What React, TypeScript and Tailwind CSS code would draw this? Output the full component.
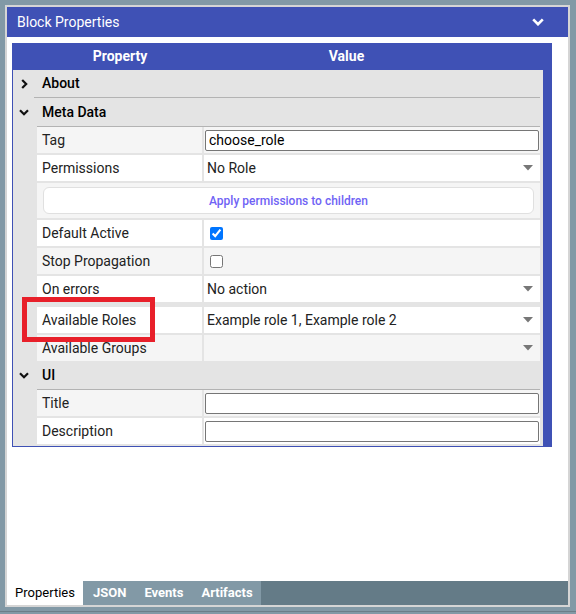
import React from "react";

const FONT = { fontFamily: "Roboto, 'Liberation Sans', sans-serif" };

function Caret() {
  return (
    <svg width="10" height="6" viewBox="0 0 10 6" className="shrink-0">
      <path d="M0 0 L10 0 L5 5.5 Z" fill="#777" />
    </svg>
  );
}

function ChevronDown({ color = "#111", size = 10 }: { color?: string; size?: number }) {
  return (
    <svg width={size} height={size * 0.7} viewBox="0 0 10 7">
      <path d="M1 1.2 L5 5.2 L9 1.2" fill="none" stroke={color} strokeWidth="2.2" />
    </svg>
  );
}

function ChevronRight() {
  return (
    <svg width="7" height="10" viewBox="0 0 7 10">
      <path d="M1.2 1 L5.2 5 L1.2 9" fill="none" stroke="#111" strokeWidth="2.2" />
    </svg>
  );
}

function Row({
  label,
  stripe,
  children,
  className = "",
}: {
  label: string;
  stripe: boolean;
  children?: React.ReactNode;
  className?: string;
}) {
  const bg = stripe ? "bg-[#f5f5f5]" : "bg-white";
  return (
    <div className={`flex gap-[2px] h-[26px] ${className}`}>
      <div className={`w-[165px] shrink-0 ${bg} flex items-center pl-[5px] text-[14px] text-[#222]`}>
        {label}
      </div>
      <div className={`flex-1 ${bg} flex items-center pl-px pr-[7px]`}>{children}</div>
    </div>
  );
}

function SelectValue({ text }: { text?: string }) {
  return (
    <div className="flex-1 flex items-center justify-between pl-[2px]">
      <span className="text-[14px] text-[#222]">{text}</span>
      <Caret />
    </div>
  );
}

function TextInput({ value = "" }: { value?: string }) {
  return (
    <div className="flex-1 h-[21px] bg-white border border-[#767676] rounded-[2px] flex items-center pl-[3px] text-[14px] text-black mr-[-6px]">
      {value}
    </div>
  );
}

function SectionHead({
  title,
  open,
  lineLeft,
  h,
}: {
  title: string;
  open: boolean;
  lineLeft: string;
  h: string;
}) {
  return (
    <div>
      <div className={`${h} flex items-center`}>
        <div className="w-[22px] flex justify-center">{open ? <ChevronDown /> : <ChevronRight />}</div>
        <span className="ml-[7px] text-[14px] font-medium text-black">{title}</span>
      </div>
      <div className={`h-px bg-[#b3b3b3] ${lineLeft}`} />
    </div>
  );
}

export default function App() {
  return (
    <div className="relative w-[576px] h-[614px] bg-[#8299a6] overflow-hidden" style={FONT}>
      <div className="absolute left-0 right-0 top-[611px] h-px bg-[#6c7e88]" />
      <div className="pt-[5px] pl-[5px] pr-[6px]">
        <div className="border-2 border-[#d5d5d5] flex flex-col h-[602px]">
          {/* header */}
          <div className="h-[30px] bg-[#3f51b5] flex items-center justify-between pl-[10px] pr-[24px]">
            <span className="text-white text-[14px]">Block Properties</span>
            <ChevronDown color="#fff" size={12} />
          </div>

          {/* content */}
          <div className="flex-1 bg-white pt-[6px] pl-[5px] pr-[16px]">
            <div className="bg-[#3f51b5] pl-px pb-px pr-[9px]">
              <div className="h-[27px] flex items-center text-white font-bold text-[14px] mr-[-9px]">
                <div className="w-[214px] text-center">Property</div>
                <div className="flex-1 text-center pr-[86px]">Value</div>
              </div>
              <div className="bg-[#e4e4e4] pr-[3px] pb-[2px]">
                <SectionHead title="About" open={false} lineLeft="ml-[21px]" h="h-[27px]" />
                <SectionHead title="Meta Data" open lineLeft="ml-[24px]" h="h-[28px]" />
                <div className="pl-[24px] flex flex-col gap-[2px]">
                  <Row label="Tag" stripe>
                    <TextInput value="choose_role" />
                  </Row>
                  <Row label="Permissions" stripe={false}>
                    <SelectValue text="No Role" />
                  </Row>
                  <div className="h-[35px] bg-[#f5f5f5] px-[6px] pt-[4px]">
                    <div className="h-[27px] bg-white border border-[#e0e0e0] rounded-[6px] flex items-center justify-center text-[12px] font-medium text-[#6f63f5]">
                      Apply permissions to children
                    </div>
                  </div>
                  <Row label="Default Active" stripe={false}>
                    <input
                      type="checkbox"
                      defaultChecked
                      readOnly
                      className="w-[13px] h-[13px] ml-[5px] m-0"
                    />
                  </Row>
                  <Row label="Stop Propagation" stripe>
                    <input type="checkbox" readOnly className="w-[13px] h-[13px] ml-[5px] m-0" />
                  </Row>
                  <Row label="On errors" stripe={false}>
                    <SelectValue text="No action" />
                  </Row>
                  <Row label="Available Roles" stripe={false} className="mt-[3px]">
                    <SelectValue text="Example role 1, Example role 2" />
                  </Row>
                  <Row label="Available Groups" stripe>
                    <SelectValue />
                  </Row>
                </div>
                <SectionHead title="UI" open lineLeft="ml-[24px]" h="h-[28px]" />
                <div className="pl-[24px] flex flex-col gap-[2px]">
                  <Row label="Title" stripe>
                    <TextInput />
                  </Row>
                  <Row label="Description" stripe={false}>
                    <TextInput />
                  </Row>
                </div>
              </div>
            </div>
          </div>

          {/* tabs */}
          <div className="h-[24px] bg-[#647b87] flex text-[13px]">
            <div className="w-[76px] bg-white text-black flex items-center justify-center">Properties</div>
            <div className="bg-[#8299a6] flex text-white font-bold">
              <div className="pl-[10px] pr-[9px] flex items-center">JSON</div>
              <div className="px-[9px] flex items-center">Events</div>
              <div className="pl-[9px] pr-[8px] flex items-center">Artifacts</div>
            </div>
          </div>
        </div>
      </div>

      {/* highlight */}
      <div className="absolute left-[22px] top-[297px] w-[133px] h-[45px] border-[5px] border-[#e8202a]" />
    </div>
  );
}
